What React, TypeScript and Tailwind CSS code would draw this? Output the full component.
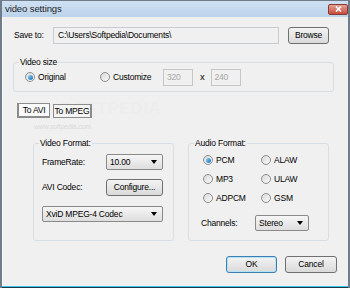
import React from "react";

const font = "font-['Liberation_Sans',Arial,sans-serif]";

function Radio({ checked, label }: { checked?: boolean; label: string }) {
  return (
    <div className="flex items-center gap-[3px]">
      <span className="w-[10px] h-[10px] rounded-full border border-[#8f8f8f] bg-gradient-to-br from-[#d8d8d8] to-[#fbfbfb] flex items-center justify-center">
        {checked && (
          <span className="w-[5px] h-[5px] rounded-full bg-gradient-to-br from-[#7fd1f7] to-[#1b6fb8]" />
        )}
      </span>
      <span>{label}</span>
    </div>
  );
}

function Arrow() {
  return (
    <svg width="6" height="4" viewBox="0 0 6 4" className="mr-[5px]">
      <path d="M0 0h6L3 4z" fill="#000" />
    </svg>
  );
}

function Select({ value, w }: { value: string; w: string }) {
  return (
    <div
      className={`${w} h-[16px] flex items-center justify-between rounded-[2px] border border-[#8a8a8a] bg-gradient-to-b from-[#f6f6f6] to-[#dedede] pl-[3px]`}
    >
      <span>{value}</span>
      <Arrow />
    </div>
  );
}

function Button({ label, w, primary }: { label: string; w: string; primary?: boolean }) {
  return (
    <div
      className={`${w} h-[17px] flex items-center justify-center rounded-[3px] border ${
        primary ? "border-[#3c7fb1] shadow-[inset_0_0_0_1px_#b4e3f8]" : "border-[#707070]"
      } bg-gradient-to-b from-[#f3f3f3] to-[#dadada]`}
    >
      {label}
    </div>
  );
}

function Group({ title, children, className }: { title: string; children: React.ReactNode; className?: string }) {
  return (
    <div className={`relative border border-[#d5dfe5] rounded-[3px] ${className ?? ""}`}>
      <span className="absolute left-[5px] top-[-7px] px-[1px] bg-[#f0f0f0] leading-[12px]">{title}</span>
      {children}
    </div>
  );
}

export default function App() {
  return (
    <div
      className={`w-[350px] h-[288px] flex flex-col bg-[#c9d9ea] border-x-2 border-t border-[#6e7d89] text-[8.5px] tracking-[-0.2px] text-black ${font}`}
    >
      {/* Title bar */}
      <div className="h-[16px] flex items-center justify-between bg-gradient-to-b from-[#cfe0f2] to-[#bcd3ea] pl-[3px]">
        <span className="text-[9.5px] tracking-[-0.1px] text-[#1e1e1e]">video settings</span>
        <div className="w-[20px] h-[11px] rounded-[2px] border border-[#8a3a32] bg-gradient-to-b from-[#e6a095] to-[#c44a3c] flex items-center justify-center">
          <svg width="7" height="6" viewBox="0 0 7 6">
            <path d="M1 0.5l5 5M6 0.5l-5 5" stroke="#fff" strokeWidth="1.6" />
          </svg>
        </div>
      </div>

      {/* Body */}
      <div className="relative flex-1 flex flex-col bg-[#f0f0f0] border-l border-[#fafafa]">
        {/* Save to */}
        <div className="flex items-center mt-[10px] h-[17px]">
          <span className="ml-[11px] w-[39px]">Save to:</span>
          <div className="w-[226px] h-[17px] border border-[#c8ccd2] bg-[#f0f0f0] flex items-center pl-[4px]">
            C:\Users\Softpedia\Documents\
          </div>
          <div className="ml-[9px]">
            <Button label="Browse" w="w-[41px]" />
          </div>
        </div>

        {/* Video size */}
        <Group title="Video size" className="ml-[10px] mt-[18px] w-[321px] h-[30px]">
          <div className="h-full flex items-center pl-[11px]">
            <div className="w-[75px]">
              <Radio checked label="Original" />
            </div>
            <div className="w-[63px]">
              <Radio label="Customize" />
            </div>
            <div className="w-[30px] h-[17px] border border-[#c6c6c6] flex items-center pl-[3px] text-[#a6a6a6]">320</div>
            <span className="ml-[7px] text-[9.5px]">x</span>
            <div className="ml-[6px] w-[30px] h-[17px] border border-[#c6c6c6] flex items-center pl-[3px] text-[#a6a6a6]">240</div>
          </div>
        </Group>

        {/* Tabs */}
        <div className="relative flex items-end mt-[11px] ml-[14px] whitespace-nowrap">
          <span className="absolute left-[44px] top-[-3px] text-[16px] leading-[18px] tracking-[1px] font-bold text-[#ededed]">
            SOFTPEDIA
          </span>
          <span className="absolute left-[17px] top-[19px] text-[7px] text-[#dadada]">www.softpedia.com</span>
          <div className="relative w-[33px] h-[15px] flex items-center justify-center border border-[#8c8c8c] border-l-2 border-b-2 bg-[#fbfbfb]">
            To AVI
          </div>
          <div className="relative ml-[3px] w-[39px] h-[14px] flex items-center justify-center border border-[#8c8c8c] border-r-2 bg-[#f4f4f4]">
            To MPEG
          </div>
        </div>

        {/* Format groups */}
        <div className="flex mt-[25px] ml-[30px] gap-[14px]">
          <Group title="Video Format:" className="w-[141px] h-[98px]">
            <div className="flex flex-col pt-[10px] pl-[8px]">
              <div className="flex items-center">
                <span className="w-[64px]">FrameRate:</span>
                <Select value="10.00" w="w-[57px]" />
              </div>
              <div className="flex items-center mt-[9px]">
                <span className="w-[64px]">AVI Codec:</span>
                <Button label="Configure..." w="w-[57px]" />
              </div>
              <div className="mt-[10px]">
                <Select value="XviD MPEG-4 Codec" w="w-[121px]" />
              </div>
            </div>
          </Group>
          <Group title="Audio Format:" className="w-[141px] h-[98px]">
            <div className="grid grid-cols-[58px_1fr] gap-y-[6px] pt-[10px] pl-[14px]">
              <Radio checked label="PCM" />
              <Radio label="ALAW" />
              <Radio label="MP3" />
              <Radio label="ULAW" />
              <Radio label="ADPCM" />
              <Radio label="GSM" />
            </div>
            <div className="flex items-center mt-[11px] pl-[12px]">
              <span className="w-[54px]">Channels:</span>
              <Select value="Stereo" w="w-[54px]" />
            </div>
          </Group>
        </div>

        {/* Buttons */}
        <div className="flex mt-[15px] ml-[223px] gap-[8px]">
          <Button label="OK" w="w-[51px]" primary />
          <Button label="Cancel" w="w-[52px]" />
        </div>
      </div>
      <div className="h-[1px] bg-[#3cc4e8]" />
      <div className="h-[1px] bg-[#1c3a4a]" />
    </div>
  );
}
